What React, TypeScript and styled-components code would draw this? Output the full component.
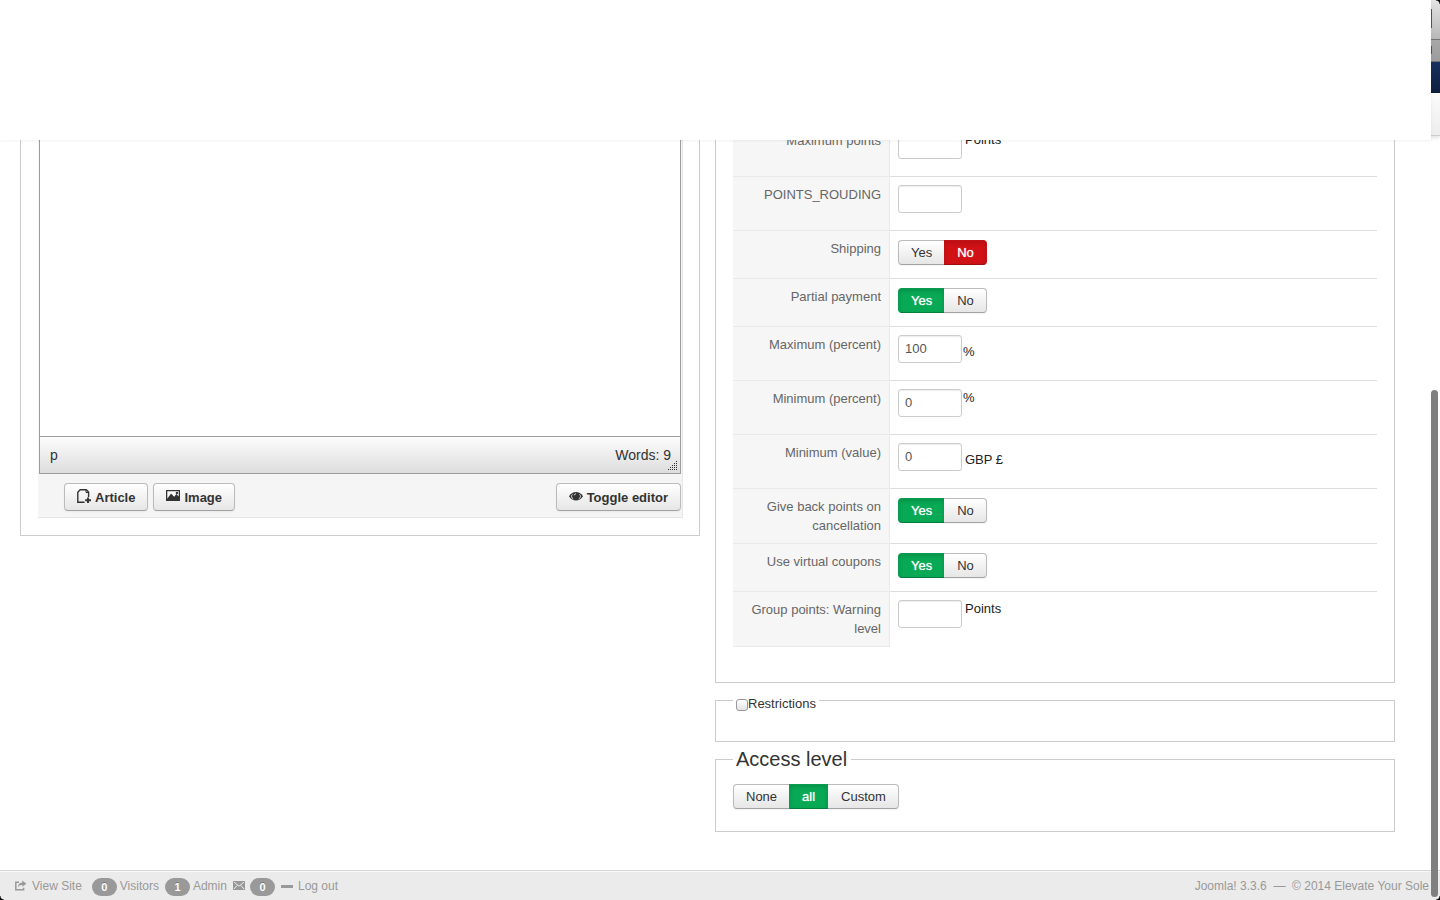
import React from "react";
import styled, { createGlobalStyle, css } from "styled-components";

const GlobalStyle = createGlobalStyle`
  *, *::before, *::after { box-sizing: border-box; }
  body {
    margin: 0;
    background: #fff;
    color: #333;
    font-family: "Helvetica Neue", "Liberation Sans", Arial, sans-serif;
    font-size: 13px;
    line-height: 19px;
  }
`;

const raised = css`
  border: 1px solid #bbb;
  border-bottom-color: #a2a2a2;
  background: linear-gradient(#fff, #e6e6e6);
  box-shadow: 0 1px 2px rgba(0, 0, 0, 0.05);
  color: #333;
`;

const Page = styled.div`
  position: relative;
  display: flex;
  flex-direction: column;
  min-height: 100vh;
  overflow: hidden;
`;

const Header = styled.header`
  position: relative;
  z-index: 2;
  height: 140px;
  margin-right: 9px;
  background: #fff;
  box-shadow: 0 1px 3px rgba(0, 0, 0, 0.06);
`;

const WindowEdge = styled.div`
  position: absolute;
  z-index: 1;
  top: 0;
  right: 0;
  width: 16px;
  display: flex;
  flex-direction: column;
  box-shadow: 0 2px 4px rgba(0, 0, 0, 0.12);
`;

const Strip = styled.div<{ $height: number; $fill: string; $line: string }>`
  height: ${(p) => p.$height}px;
  background: ${(p) => p.$fill};
  border-bottom: 1px solid ${(p) => p.$line};
`;

const EdgeMark = styled.div<{ $top: number; $height: number }>`
  position: absolute;
  top: ${(p) => p.$top}px;
  left: 7px;
  width: 1px;
  height: ${(p) => p.$height}px;
  background: #555;
`;

const Corner = styled.div<{ $v: "top" | "bottom"; $h: "left" | "right" }>`
  position: absolute;
  z-index: 4;
  ${(p) => p.$v}: 0;
  ${(p) => p.$h}: 0;
  width: 4px;
  height: 4px;
  background: radial-gradient(
    circle at ${(p) => (p.$h === "left" ? "right" : "left")} ${(p) => (p.$v === "top" ? "bottom" : "top")},
    transparent 3px,
    #000 4px
  );
`;

const Columns = styled.main`
  display: grid;
  grid-template-columns: 1fr 1fr;
  align-items: start;
  gap: 15px;
  margin-top: -17px;
  padding: 0 45px 38px 20px;
`;

const Column = styled.div`
  display: flex;
  flex-direction: column;
  gap: 5px;
  min-width: 0;
`;

const Panel = styled.section<{ $pad: string }>`
  border: 1px solid #ccc;
  border-top: 0;
  padding: ${(p) => p.$pad};
`;

const EditorWrap = styled.div`
  background: #f5f5f5;
  border-right: 1px solid #e6e6e6;
  border-bottom: 1px solid #e6e6e6;
  padding: 0 1px 6px;
`;

const Editor = styled.div`
  border: 1px solid #9d9d9d;
  border-top: 0;
`;

const EditorText = styled.textarea`
  display: block;
  width: 100%;
  height: 313px;
  border: 0;
  padding: 8px;
  resize: none;
  outline: 0;
  background: #fff;
  font: inherit;
`;

const StatusBar = styled.div`
  position: relative;
  display: flex;
  align-items: center;
  justify-content: space-between;
  height: 37px;
  padding: 0 9px 0 10px;
  border-top: 1px solid #9d9d9d;
  background: linear-gradient(#fdfdfd, #ddd);
  font-size: 14px;
`;

const Grip = styled.svg`
  position: absolute;
  right: 3px;
  bottom: 3px;
`;

const EditorButtons = styled.div`
  display: flex;
  gap: 5px;
  padding: 9px 0 0 25px;
`;

const Button = styled.button<{ $end?: boolean }>`
  ${raised}
  display: flex;
  align-items: center;
  gap: 4px;
  height: 28px;
  padding: 0 12px;
  border-radius: 4px;
  font: bold 13px/19px "Helvetica Neue", "Liberation Sans", Arial, sans-serif;
  margin-left: ${(p) => (p.$end ? "auto" : "0")};
`;

const Options = styled.table`
  width: 100%;
  table-layout: fixed;
  border-collapse: separate;
  border-spacing: 0;
`;

const Key = styled.th<{ $height: number }>`
  width: 157px;
  height: ${(p) => p.$height}px;
  padding: 8px;
  border-right: 1px solid #e9e9e9;
  border-bottom: 1px solid #e9e9e9;
  background: #f6f6f6;
  color: #666;
  font-weight: normal;
  text-align: right;
  vertical-align: top;
`;

const Value = styled.td`
  padding: 8px 8px 0;
  border-bottom: 1px solid #ddd;
  vertical-align: top;
  tr:last-child > & { border-bottom: 0; }
`;

const Field = styled.div<{ $gap: number }>`
  display: flex;
  align-items: flex-start;
  gap: ${(p) => p.$gap}px;
`;

const TextInput = styled.input`
  width: 64px;
  height: 28px;
  padding: 0 6px 2px;
  border: 1px solid #ccc;
  border-radius: 3px;
  box-shadow: inset 0 1px 1px rgba(0, 0, 0, 0.075);
  color: #555;
  font: inherit;
`;

const Unit = styled.span<{ $low?: boolean }>`
  padding-top: ${(p) => (p.$low ? 8 : 0)}px;
  line-height: 17px;
  color: #222;
`;

const Group = styled.div<{ $offset?: number }>`
  display: flex;
  padding-top: ${(p) => p.$offset ?? 0}px;
`;

const Segment = styled.label<{ $tone?: "green" | "red" }>`
  ${raised}
  display: flex;
  align-items: center;
  height: 25px;
  padding: 0 12px;
  cursor: pointer;
  & + & { border-left-width: 0; padding-left: 13px; }
  &:first-child { border-radius: 4px 0 0 4px; border-right-width: 0; }
  &:last-child { border-radius: 0 4px 4px 0; }
  &:nth-child(2) { border-left-width: 1px; padding-left: 12px; }
  ${(p) =>
    p.$tone &&
    css`
      color: #fff;
      text-shadow: 0 0 1px rgba(255, 255, 255, 0.8);
      background: ${p.$tone === "green" ? "#08a955" : "#d01217"};
      border-color: ${p.$tone === "green" ? "#079c4e #079c4e #067d3f" : "#c31116 #c31116 #9c0e12"};
      box-shadow: inset 0 2px 4px rgba(0, 0, 0, 0.15);
    `}
`;

const HiddenRadio = styled.input`
  appearance: none;
  width: 0;
  height: 0;
  margin: 0;
`;

const Fieldset = styled.fieldset<{ $pad: string }>`
  min-width: 0;
  margin: 0;
  border: 1px solid #ccc;
  padding: ${(p) => p.$pad};
`;

const Legend = styled.legend<{ $large?: boolean }>`
  padding: ${(p) => (p.$large ? "0 4px 0 3px" : "6px 3px 0")};
  font-size: ${(p) => (p.$large ? 20 : 13)}px;
  line-height: ${(p) => (p.$large ? 25 : 19)}px;
`;

const CheckLabel = styled.label`
  display: flex;
  align-items: center;
`;

const Checkbox = styled.input`
  appearance: none;
  width: 12px;
  height: 12px;
  margin: 2px 0 0;
  border: 1px solid #999;
  border-radius: 3px;
  background: linear-gradient(#fff, #e4e4e4);
`;

const Footer = styled.footer`
  display: flex;
  justify-content: space-between;
  align-items: center;
  height: 30px;
  margin-top: auto;
  padding: 2px 11px 0 14px;
  border-top: 1px solid #d4d4d4;
  background: #ebebeb;
  box-shadow: inset 0 1px 0 #f8f8f8;
  color: #999;
  font-size: 12px;
`;

const StatusItems = styled.nav`
  display: flex;
  align-items: center;
`;

const FooterLink = styled.a<{ $after?: number }>`
  display: flex;
  align-items: center;
  gap: 5px;
  margin-right: ${(p) => p.$after ?? 0}px;
  color: #999;
  text-decoration: none;
`;

const Badge = styled.span<{ $after: number }>`
  width: 25px;
  height: 18px;
  margin-right: ${(p) => p.$after}px;
  border-radius: 9px;
  background: #999;
  color: #fff;
  font-size: 11px;
  font-weight: bold;
  line-height: 18px;
  text-align: center;
  text-shadow: 0 -1px 0 rgba(0, 0, 0, 0.25);
`;

const ScrollThumb = styled.div`
  position: absolute;
  z-index: 3;
  right: 2px;
  bottom: 3px;
  width: 7px;
  height: 507px;
  border-radius: 4px;
  background: #7f7f7f;
`;

const FileAddIcon = () => (
  <svg width="14" height="16" viewBox="0 0 14 16" fill="none" stroke="#333" aria-hidden="true">
    <path d="M7.5 13.3H.8V3.2L3.2 .8H9.3L11.6 3V8" strokeWidth="1.4" />
    <path d="M9 1V3.5H11.6" strokeWidth="1" />
    <path d="M11 8.5V14M8.2 11.2H14" strokeWidth="1.9" />
  </svg>
);

const PictureIcon = () => (
  <svg width="14" height="14" viewBox="0 0 14 14" aria-hidden="true">
    <path d="M0 0H14V11H0Z" fill="#333" />
    <path d="M1.3 1.3H12.7V6.4L10.3 3.9L8.2 6.8L5 3.6L1.3 8.8Z" fill="#fff" />
    <circle cx="10.9" cy="3" r="1.2" fill="#333" />
  </svg>
);

const EyeIcon = () => (
  <svg width="14" height="14" viewBox="0 0 14 14" aria-hidden="true">
    <path d="M0 6.2C2 3 4.3 1.9 7 1.9S12 3 14 6.2C12 9.3 9.7 10.4 7 10.4S2 9.3 0 6.2Z" fill="#333" />
    <path d="M3.5 4.3C1.8 6 2.3 7.7 4.2 8.9M10.5 4.3C12.2 6 11.7 7.7 9.8 8.9" fill="none" stroke="#fff" strokeWidth=".8" />
    <path d="M5.2 5.3A2 2 0 0 1 7 3.7" fill="none" stroke="#fff" strokeWidth=".8" />
  </svg>
);

const ShareIcon = () => (
  <svg width="13" height="14" viewBox="0 0 13 14" aria-hidden="true">
    <path d="M5 2.2H1.8V9.8H9.6V7.8" fill="none" stroke="#999" strokeWidth="1.5" />
    <path d="M8.3 .6L12.4 3.7L8.3 6.8V5C6.3 5 5 5.6 4 7.4C4.1 4.4 5.5 2.6 8.3 2.5Z" fill="#999" />
  </svg>
);

const MailIcon = () => (
  <svg width="12" height="11" viewBox="0 0 12 11" aria-hidden="true">
    <path d="M0 0H12V9H0Z" fill="#999" />
    <path d="M1 1L6 5.2L11 1M1 8L4.3 4.3M11 8L7.7 4.3" fill="none" stroke="#ebebeb" />
  </svg>
);

const MinusIcon = () => (
  <svg width="12" height="12" viewBox="0 0 12 12" aria-hidden="true">
    <path d="M0 4H12V7H0Z" fill="#999" />
  </svg>
);

const gripDots = [0, 1, 2, 3, 4].flatMap((row) =>
  Array.from({ length: row + 1 }, (_, i) => ({ x: 8 - i * 2, y: row * 2 }))
);

type Choice = { label: string; tone?: "green" | "red" };

const Choices = ({ name, items, offset }: { name: string; items: Choice[]; offset?: number }) => (
  <Group role="radiogroup" aria-label={name} $offset={offset}>
    {items.map((item) => (
      <Segment key={item.label} $tone={item.tone}>
        <HiddenRadio type="radio" name={name} defaultChecked={!!item.tone} />
        {item.label}
      </Segment>
    ))}
  </Group>
);

type Row = {
  label: string;
  height: number;
  value?: string;
  unit?: string;
  low?: boolean;
  gap?: number;
  toggle?: "yes" | "no";
};

const rows: Row[] = [
  { label: "Maximum points", height: 54, unit: "Points", gap: 3 },
  { label: "POINTS_ROUDING", height: 54 },
  { label: "Shipping", height: 48, toggle: "no" },
  { label: "Partial payment", height: 48, toggle: "yes" },
  { label: "Maximum (percent)", height: 54, value: "100", unit: "%", low: true },
  { label: "Minimum (percent)", height: 54, value: "0", unit: "%" },
  { label: "Minimum (value)", height: 54, value: "0", unit: "GBP £", low: true, gap: 3 },
  { label: "Give back points on cancellation", height: 55, toggle: "yes" },
  { label: "Use virtual coupons", height: 48, toggle: "yes" },
  { label: "Group points: Warning level", height: 55, unit: "Points", gap: 3 },
];

const OptionRow = ({ row, id }: { row: Row; id: string }) => (
  <tr>
    <Key scope="row" $height={row.height}>
      {row.toggle ? row.label : <label htmlFor={id}>{row.label}</label>}
    </Key>
    <Value>
      {row.toggle ? (
        <Choices
          name={row.label}
          offset={1}
          items={[
            { label: "Yes", tone: row.toggle === "yes" ? "green" : undefined },
            { label: "No", tone: row.toggle === "no" ? "red" : undefined },
          ]}
        />
      ) : (
        <Field $gap={row.gap ?? 1}>
          <TextInput id={id} type="text" defaultValue={row.value} />
          {row.unit && <Unit $low={row.low}>{row.unit}</Unit>}
        </Field>
      )}
    </Value>
  </tr>
);

export default function App() {
  return (
    <Page>
      <GlobalStyle />
      <Header />
      <WindowEdge>
        <Strip $height={40} $fill="linear-gradient(#e4e4e4, #b8b8b8)" $line="#737373" />
        <Strip $height={22} $fill="linear-gradient(#a8a8a8, #9c9c9c)" $line="#707070" />
        <Strip $height={31} $fill="linear-gradient(#16305f, #0f1f40)" $line="#0c1a36" />
        <Strip $height={43} $fill="linear-gradient(#fbfbfb, #ededed)" $line="#ccc" />
        <EdgeMark $top={9} $height={19} />
        <EdgeMark $top={46} $height={8} />
      </WindowEdge>

      <Columns>
        <Column>
          <Panel $pad="0 16px 17px 17px">
            <EditorWrap>
              <Editor>
                <EditorText aria-label="Description" />
                <StatusBar>
                  <span>p</span>
                  <span>Words: 9</span>
                  <Grip width="9" height="9" viewBox="0 0 9 9" aria-hidden="true">
                    {gripDots.map((d) => (
                      <rect key={`${d.x}-${d.y}`} x={d.x} y={d.y} width="1" height="1" fill="#333" />
                    ))}
                  </Grip>
                </StatusBar>
              </Editor>
              <EditorButtons>
                <Button type="button"><FileAddIcon />Article</Button>
                <Button type="button"><PictureIcon />Image</Button>
                <Button type="button" $end><EyeIcon />Toggle editor</Button>
              </EditorButtons>
            </EditorWrap>
          </Panel>
        </Column>

        <Column>
          <Panel $pad="0 17px 35px">
            <Options>
              <tbody>
                {rows.map((row, i) => (
                  <OptionRow key={row.label} row={row} id={`option-${i}`} />
                ))}
              </tbody>
            </Options>
          </Panel>

          <Fieldset $pad="0 17px 28px">
            <Legend>
              <CheckLabel>
                <Checkbox type="checkbox" />
                Restrictions
              </CheckLabel>
            </Legend>
          </Fieldset>

          <Fieldset $pad="12px 17px 22px">
            <Legend $large>Access level</Legend>
            <Choices
              name="Access level"
              items={[{ label: "None" }, { label: "all", tone: "green" }, { label: "Custom" }]}
            />
          </Fieldset>
        </Column>
      </Columns>

      <Footer>
        <StatusItems>
          <FooterLink href="#site" $after={10}><ShareIcon />View Site</FooterLink>
          <Badge $after={3}>0</Badge>
          <FooterLink href="#visitors" $after={6}>Visitors</FooterLink>
          <Badge $after={3}>1</Badge>
          <FooterLink href="#admin" $after={6}>Admin</FooterLink>
          <FooterLink href="#messages" aria-label="Messages" $after={5}><MailIcon /></FooterLink>
          <Badge $after={6}>0</Badge>
          <FooterLink href="#logout"><MinusIcon />Log out</FooterLink>
        </StatusItems>
        <span>Joomla! 3.3.6 &nbsp;—&nbsp; © 2014 Elevate Your Sole</span>
      </Footer>

      <ScrollThumb />
      <Corner $v="top" $h="right" />
      <Corner $v="bottom" $h="left" />
      <Corner $v="bottom" $h="right" />
    </Page>
  );
}
